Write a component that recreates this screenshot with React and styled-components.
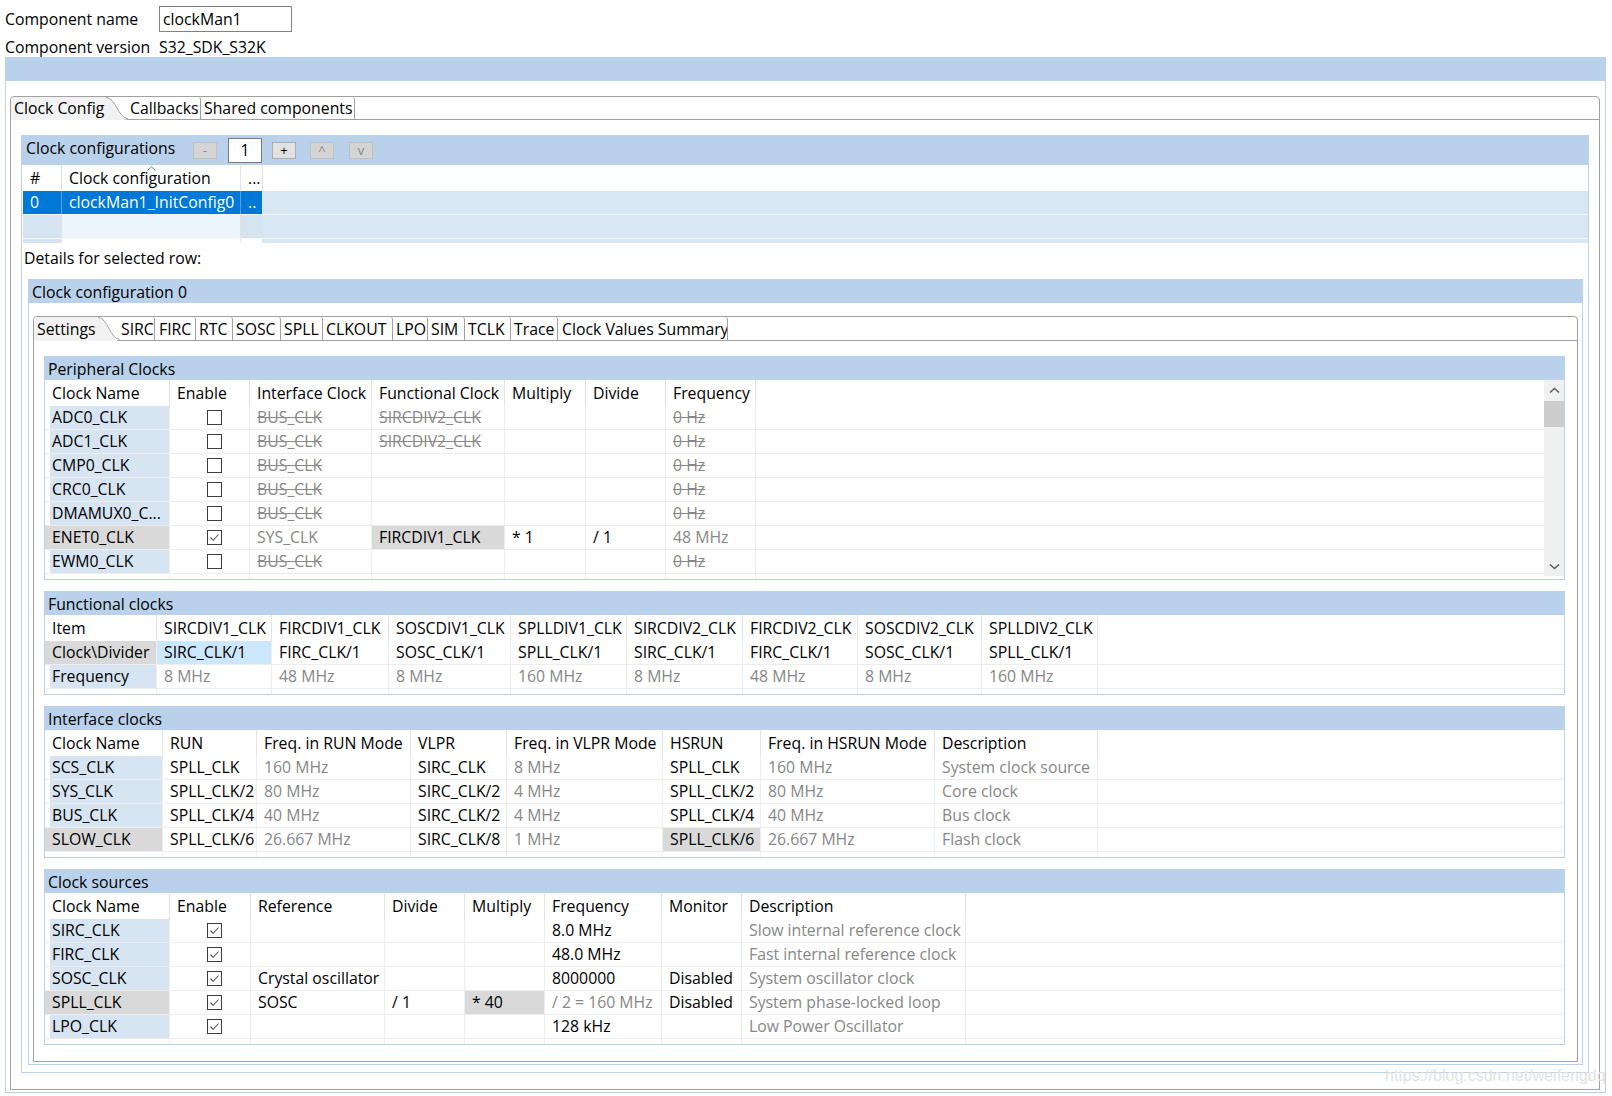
import React from "react";
import styled, { createGlobalStyle } from "styled-components";

const BLUE = "#b9d1ea";
const NAME_BG = "#d7e4f2";
const HOT_BG = "#d9d9d9";
const PICK_BG = "#cce8ff";
const LINE = "#ededed";
const FRAME = "#a0a0a0";
const MUTED = "#878787";

const GlobalStyle = createGlobalStyle`
  * { box-sizing: border-box; }
  html, body { margin: 0; padding: 0; background: #fff; }
  body {
    font-family: "Open Sans", "Noto Sans", "DejaVu Sans", sans-serif;
    font-size: 15.8px;
    color: #000;
  }
`;

const Page = styled.div`
  position: relative;
  width: 1612px;
  height: 1096px;
  overflow: hidden;
`;

// ---- component name / version form
const Form = styled.div`
  display: grid;
  grid-template-columns: 154px 1fr;
  grid-template-rows: 26px 25px;
  align-items: center;
  padding: 6px 0 0 5px;
`;

const FormText = styled.div`
  white-space: nowrap;
  ${(p) => p.$low && "align-self: end; line-height: 19px;"}
`;

const NameBox = styled.div`
  width: 133px;
  height: 26px;
  border: 1px solid #828282;
  padding-left: 3px;
  line-height: 24px;
`;

const BlueBar = styled.div`
  height: 24px;
  margin: 0 6px 0 5px;
  background: ${BLUE};
`;

const Panel = styled.div`
  margin: 0 6px 0 5px;
  border: 1px solid ${BLUE};
  border-top: none;
  padding: 15px 5px 2px 4px;
`;

// ---- tab folders
const Folder = styled.div`
  border: 1px solid ${FRAME};
  border-radius: 4px 4px 0 0;
  background: #fff;
`;

const FolderBody = styled.div`
  padding: ${(p) => p.$pad};
`;

const TabStrip = styled.div`
  display: flex;
  height: ${(p) => p.$h}px;
  border-bottom: 1px solid ${FRAME};
`;

const Tab = styled.div`
  display: flex;
  align-items: center;
  flex: 0 0 ${(p) => p.$w}px;
  padding-left: ${(p) => p.$pl ?? 3}px;
  border-right: 1px solid ${FRAME};
  border-top-right-radius: 3px;
  white-space: nowrap;
  overflow: hidden;
`;

const ActiveWrap = styled.div`
  display: flex;
  margin-bottom: -1px;
`;

const ActiveLabel = styled.div`
  display: flex;
  align-items: center;
  width: ${(p) => p.$w}px;
  padding: 0 0 1px 3px;
  background: #f2f2f2;
  border-top-left-radius: 4px;
  white-space: nowrap;
`;

const Curve = styled.svg`
  display: block;
  flex: 0 0 auto;
`;

function ActiveTab({ label, w, cw, h }) {
  return (
    <ActiveWrap>
      <ActiveLabel $w={w}>{label}</ActiveLabel>
      <Curve width={cw} height={h} viewBox={`0 0 ${cw} ${h}`}>
        <path d={`M0 0 C${cw * 0.45} 0 ${cw * 0.55} ${h} ${cw} ${h} L0 ${h} Z`} fill="#f2f2f2" />
        <path
          d={`M0 0.5 C${cw * 0.45} 0.5 ${cw * 0.55} ${h - 1.5} ${cw} ${h - 1.5}`}
          fill="none"
          stroke={FRAME}
          strokeWidth="1"
        />
      </Curve>
    </ActiveWrap>
  );
}

// ---- sections and groups
const Section = styled.div`
  border: 1px solid ${BLUE};
  margin: ${(p) => p.$m || "0"};
`;

const SectionBar = styled.div`
  display: flex;
  align-items: center;
  height: ${(p) => p.$h}px;
  padding-left: ${(p) => p.$pl ?? 3}px;
  background: ${BLUE};
  white-space: nowrap;
`;

const BarTitle = styled.div`
  flex: 0 0 ${(p) => p.$w}px;
  margin-bottom: 6px;
`;

const MiniBtn = styled.div`
  display: flex;
  align-items: center;
  justify-content: center;
  width: 24px;
  height: 17px;
  margin-left: ${(p) => p.$ml || 0}px;
  border: 1px solid ${(p) => (p.$on ? "#adadad" : "#c2c2c2")};
  background: ${(p) => (p.$on ? "#e1e1e1" : "#d4d4d4")};
  color: ${(p) => (p.$on ? "#000" : "#8a8a8a")};
  font-size: 13px;
  line-height: 1;
`;

const CountBox = styled.div`
  width: 34px;
  height: 25px;
  margin-left: 11px;
  border: 1px solid #7a7a7a;
  background: #fff;
  text-align: center;
  line-height: 23px;
`;

const Details = styled.div`
  height: 36px;
  padding-left: 2px;
  line-height: 30px;
`;

const GroupStack = styled.div`
  display: flex;
  flex-direction: column;
  gap: 11px;
`;

// ---- clock configuration list
const CfgTable = styled.div`
  padding-left: 1px;
`;

const CfgRow = styled.div`
  display: flex;
  height: ${(p) => p.$h}px;
  background: ${(p) => p.$bg || "transparent"};
  border-bottom: ${(p) => (p.$line ? "1px solid #f4f8fc" : "none")};
`;

const CfgCell = styled.div`
  position: relative;
  flex: 0 0 ${(p) => p.$w}px;
  padding-left: 7px;
  line-height: ${(p) => p.$lh || 23}px;
  border-right: 1px solid ${(p) => p.$sep || "#e3e3e3"};
  background: ${(p) => p.$bg || "transparent"};
  color: ${(p) => p.$fg || "#000"};
  white-space: nowrap;
  overflow: hidden;
`;

const SortMark = styled.svg`
  position: absolute;
  left: 85px;
  top: 1px;
`;

// ---- data tables
const TableArea = styled.div`
  flex: 1;
  min-width: 0;
`;

const Row = styled.div`
  display: flex;
  height: ${(p) => (p.$head ? 26 : p.$tail ? 5 : 24)}px;
  border-bottom: ${(p) => (p.$head || p.$tail ? "none" : `1px solid ${LINE}`)};
`;

const tones = { name: NAME_BG, hot: HOT_BG, pick: PICK_BG };

const Cell = styled.div`
  flex: 0 0 ${(p) => p.$w}px;
  padding-left: 7px;
  line-height: 23px;
  border-right: 1px solid ${LINE};
  background: ${(p) => tones[p.$bg] || "transparent"};
  box-shadow: ${(p) => (p.$bg === "name" ? "inset 5px 0 0 #fff" : "none")};
  color: ${(p) => (p.$muted ? MUTED : "#000")};
  text-decoration: ${(p) => (p.$strike ? "line-through" : "none")};
  white-space: nowrap;
  overflow: hidden;
`;

const HeadCell = styled(Cell)`
  line-height: 26px;
  border-right-color: #e4e4e4;
`;

const CheckCell = styled(Cell)`
  display: flex;
  align-items: center;
  padding-left: 37px;
`;

const Filler = styled.div`
  flex: 1;
`;

const Box = styled.span`
  display: block;
  width: 15px;
  height: 15px;
  border: 1px solid #3c3c3c;
  background: #fff;
  & svg {
    display: block;
  }
`;

function CheckBox({ on }) {
  return (
    <Box>
      {on && (
        <svg width="13" height="13" viewBox="0 0 13 13">
          <path d="M2.5 6.5 L5.2 9.3 L10.5 3.5" fill="none" stroke="#555" strokeWidth="1.1" />
        </svg>
      )}
    </Box>
  );
}

function BodyCell({ c, w }) {
  const spec = typeof c === "string" ? { t: c } : c;
  if ("check" in spec) {
    return (
      <CheckCell $w={w}>
        <CheckBox on={spec.check} />
      </CheckCell>
    );
  }
  return (
    <Cell $w={w} $bg={spec.bg} $muted={spec.muted} $strike={spec.strike}>
      {spec.t}
    </Cell>
  );
}

function DataTable({ cols, head, rows }) {
  return (
    <TableArea>
      <Row $head>
        {head.map((h, i) => (
          <HeadCell key={i} $w={cols[i]}>
            {h}
          </HeadCell>
        ))}
        <Filler />
      </Row>
      {rows.map((r, ri) => (
        <Row key={ri}>
          {r.map((c, ci) => (
            <BodyCell key={ci} c={c} w={cols[ci]} />
          ))}
          <Filler />
        </Row>
      ))}
      <Row $tail>
        {cols.map((w, i) => (
          <Cell key={i} $w={w} />
        ))}
        <Filler />
      </Row>
    </TableArea>
  );
}

const ScrollBody = styled.div`
  display: flex;
`;

const Scroll = styled.div`
  flex: 0 0 20px;
  margin: 0 0 3px 1px;
  background: #f0f0f0;
  display: flex;
  flex-direction: column;
`;

const ScrollArrow = styled.div`
  height: 20px;
  display: flex;
  align-items: center;
  justify-content: center;
`;

const Thumb = styled.div`
  height: 26px;
  margin-top: 1px;
  background: #cdcdcd;
`;

const Track = styled.div`
  flex: 1;
`;

function Chevron({ down }) {
  return (
    <svg width="11" height="7" viewBox="0 0 11 7">
      <path
        d={down ? "M1 1.5 L5.5 5.5 L10 1.5" : "M1 5.5 L5.5 1.5 L10 5.5"}
        fill="none"
        stroke="#606060"
        strokeWidth="1.6"
      />
    </svg>
  );
}

const Watermark = styled.div`
  position: absolute;
  left: 1385px;
  top: 1068px;
  font-family: "Liberation Sans", Arial, sans-serif;
  font-size: 16px;
  line-height: 16px;
  color: #e2e2e2;
  white-space: nowrap;
`;

// ---- data
const nm = (t) => ({ t, bg: "name" });
const hot = (t) => ({ t, bg: "hot" });
const mu = (t) => ({ t, muted: true });
const st = (t) => ({ t, muted: true, strike: true });
const cb = (on) => ({ check: on });

const periphCols = [125, 80, 122, 133, 81, 80, 90];
const periphHead = ["Clock Name", "Enable", "Interface Clock", "Functional Clock", "Multiply", "Divide", "Frequency"];
const periphRows = [
  [nm("ADC0_CLK"), cb(false), st("BUS_CLK"), st("SIRCDIV2_CLK"), "", "", st("0 Hz")],
  [nm("ADC1_CLK"), cb(false), st("BUS_CLK"), st("SIRCDIV2_CLK"), "", "", st("0 Hz")],
  [nm("CMP0_CLK"), cb(false), st("BUS_CLK"), "", "", "", st("0 Hz")],
  [nm("CRC0_CLK"), cb(false), st("BUS_CLK"), "", "", "", st("0 Hz")],
  [nm("DMAMUX0_C..."), cb(false), st("BUS_CLK"), "", "", "", st("0 Hz")],
  [hot("ENET0_CLK"), cb(true), mu("SYS_CLK"), hot("FIRCDIV1_CLK"), "* 1", "/ 1", mu("48 MHz")],
  [nm("EWM0_CLK"), cb(false), st("BUS_CLK"), "", "", "", st("0 Hz")],
];

const funcCols = [112, 115, 117, 122, 116, 116, 115, 124, 116];
const funcHead = [
  "Item",
  "SIRCDIV1_CLK",
  "FIRCDIV1_CLK",
  "SOSCDIV1_CLK",
  "SPLLDIV1_CLK",
  "SIRCDIV2_CLK",
  "FIRCDIV2_CLK",
  "SOSCDIV2_CLK",
  "SPLLDIV2_CLK",
];
const funcRows = [
  [
    hot("Clock\\Divider"),
    { t: "SIRC_CLK/1", bg: "pick" },
    "FIRC_CLK/1",
    "SOSC_CLK/1",
    "SPLL_CLK/1",
    "SIRC_CLK/1",
    "FIRC_CLK/1",
    "SOSC_CLK/1",
    "SPLL_CLK/1",
  ],
  [
    nm("Frequency"),
    mu("8 MHz"),
    mu("48 MHz"),
    mu("8 MHz"),
    mu("160 MHz"),
    mu("8 MHz"),
    mu("48 MHz"),
    mu("8 MHz"),
    mu("160 MHz"),
  ],
];

const ifCols = [118, 94, 154, 96, 156, 98, 174, 163];
const ifHead = [
  "Clock Name",
  "RUN",
  "Freq. in RUN Mode",
  "VLPR",
  "Freq. in VLPR Mode",
  "HSRUN",
  "Freq. in HSRUN Mode",
  "Description",
];
const ifRows = [
  [nm("SCS_CLK"), "SPLL_CLK", mu("160 MHz"), "SIRC_CLK", mu("8 MHz"), "SPLL_CLK", mu("160 MHz"), mu("System clock source")],
  [nm("SYS_CLK"), "SPLL_CLK/2", mu("80 MHz"), "SIRC_CLK/2", mu("4 MHz"), "SPLL_CLK/2", mu("80 MHz"), mu("Core clock")],
  [nm("BUS_CLK"), "SPLL_CLK/4", mu("40 MHz"), "SIRC_CLK/2", mu("4 MHz"), "SPLL_CLK/4", mu("40 MHz"), mu("Bus clock")],
  [hot("SLOW_CLK"), "SPLL_CLK/6", mu("26.667 MHz"), "SIRC_CLK/8", mu("1 MHz"), hot("SPLL_CLK/6"), mu("26.667 MHz"), mu("Flash clock")],
];

const srcCols = [125, 81, 134, 80, 80, 117, 80, 224];
const srcHead = ["Clock Name", "Enable", "Reference", "Divide", "Multiply", "Frequency", "Monitor", "Description"];
const srcRows = [
  [nm("SIRC_CLK"), cb(true), "", "", "", "8.0 MHz", "", mu("Slow internal reference clock")],
  [nm("FIRC_CLK"), cb(true), "", "", "", "48.0 MHz", "", mu("Fast internal reference clock")],
  [nm("SOSC_CLK"), cb(true), "Crystal oscillator", "", "", "8000000", "Disabled", mu("System oscillator clock")],
  [hot("SPLL_CLK"), cb(true), "SOSC", "/ 1", hot("* 40"), mu("/ 2 = 160 MHz"), "Disabled", mu("System phase-locked loop")],
  [nm("LPO_CLK"), cb(true), "", "", "", "128 kHz", "", mu("Low Power Oscillator")],
];

// tab label, its width in the strip (border included), left padding
const innerTabs = [
  ["SIRC", 35, 1],
  ["FIRC", 41, 4],
  ["RTC", 37, 3],
  ["SOSC", 48, 3],
  ["SPLL", 42, 3],
  ["CLKOUT", 70, 3],
  ["LPO", 35, 3],
  ["SIM", 37, 3],
  ["TCLK", 46, 3],
  ["Trace", 47, 3],
  ["Clock Values Summary", 170, 4],
];

function Group({ title, children }) {
  return (
    <Section>
      <SectionBar $h={23}>{title}</SectionBar>
      {children}
    </Section>
  );
}

function ConfigList() {
  const sel = "#0078d7";
  const rowBg = "#d9e6f3";
  const side = "#d6e3f0";
  return (
    <CfgTable>
      <CfgRow $h={26}>
        <CfgCell $w={39} $lh={26}>#</CfgCell>
        <CfgCell $w={179} $lh={26}>
          <SortMark width="9" height="5" viewBox="0 0 9 5">
            <path d="M0.5 4.5 L4.5 0.8 L8.5 4.5" fill="none" stroke="#777" strokeWidth="1" />
          </SortMark>
          Clock configuration
        </CfgCell>
        <CfgCell $w={22} $lh={26}>...</CfgCell>
      </CfgRow>
      <CfgRow $h={24} $bg={rowBg} $line>
        <CfgCell $w={39} $bg={sel} $fg="#fff" $sep="#5aa3e3">0</CfgCell>
        <CfgCell $w={179} $bg={sel} $fg="#fff" $sep="#5aa3e3">clockMan1_InitConfig0</CfgCell>
        <CfgCell $w={22} $bg={sel} $fg="#fff" $sep="#e3e3e3">..</CfgCell>
      </CfgRow>
      <CfgRow $h={24} $bg={rowBg} $line>
        <CfgCell $w={39} $bg={side} />
        <CfgCell $w={179} $bg="#eaf5fd" />
        <CfgCell $w={22} $bg={side} />
      </CfgRow>
      <CfgRow $h={4} $bg={rowBg}>
        <CfgCell $w={39} $bg={side} />
        <CfgCell $w={179} $bg="#fff" />
        <CfgCell $w={22} $bg="#fff" />
      </CfgRow>
    </CfgTable>
  );
}

export default function App() {
  return (
    <Page>
      <GlobalStyle />
      <Form>
        <FormText>Component name</FormText>
        <NameBox>clockMan1</NameBox>
        <FormText $low>Component version</FormText>
        <FormText $low>S32_SDK_S32K</FormText>
      </Form>
      <BlueBar />
      <Panel>
        <Folder>
          <TabStrip $h={23}>
            <ActiveTab label="Clock Config" w={95} cw={22} h={23} />
            <Tab $w={73} $pl={2}>Callbacks</Tab>
            <Tab $w={154} $pl={3}>Shared components</Tab>
          </TabStrip>
          <FolderBody $pad="15px 10px 16px 10px">
            <Section>
              <SectionBar $h={29} $pl={4}>
                <BarTitle $w={167}>Clock configurations</BarTitle>
                <MiniBtn>-</MiniBtn>
                <CountBox>1</CountBox>
                <MiniBtn $on $ml={10}>+</MiniBtn>
                <MiniBtn $ml={14}>^</MiniBtn>
                <MiniBtn $ml={15}>v</MiniBtn>
              </SectionBar>
              <ConfigList />
              <Details>Details for selected row:</Details>
              <Section $m="0 5px 7px 6px">
                <SectionBar $h={23}>Clock configuration 0</SectionBar>
                <FolderBody $pad="13px 4px 2px 4px">
                  <Folder>
                    <TabStrip $h={24}>
                      <ActiveTab label="Settings" w={64} cw={22} h={24} />
                      {innerTabs.map(([t, w, pl]) => (
                        <Tab key={t} $w={w} $pl={pl}>
                          {t}
                        </Tab>
                      ))}
                    </TabStrip>
                    <FolderBody $pad="15px 12px 16px 10px">
                      <GroupStack>
                        <Group title="Peripheral Clocks">
                          <ScrollBody>
                            <DataTable cols={periphCols} head={periphHead} rows={periphRows} />
                            <Scroll>
                              <ScrollArrow>
                                <Chevron />
                              </ScrollArrow>
                              <Thumb />
                              <Track />
                              <ScrollArrow>
                                <Chevron down />
                              </ScrollArrow>
                            </Scroll>
                          </ScrollBody>
                        </Group>
                        <Group title="Functional clocks">
                          <DataTable cols={funcCols} head={funcHead} rows={funcRows} />
                        </Group>
                        <Group title="Interface clocks">
                          <DataTable cols={ifCols} head={ifHead} rows={ifRows} />
                        </Group>
                        <Group title="Clock sources">
                          <DataTable cols={srcCols} head={srcHead} rows={srcRows} />
                        </Group>
                      </GroupStack>
                    </FolderBody>
                  </Folder>
                </FolderBody>
              </Section>
            </Section>
          </FolderBody>
        </Folder>
      </Panel>
      <Watermark>https://blog.csdn.net/weifengdq</Watermark>
    </Page>
  );
}
